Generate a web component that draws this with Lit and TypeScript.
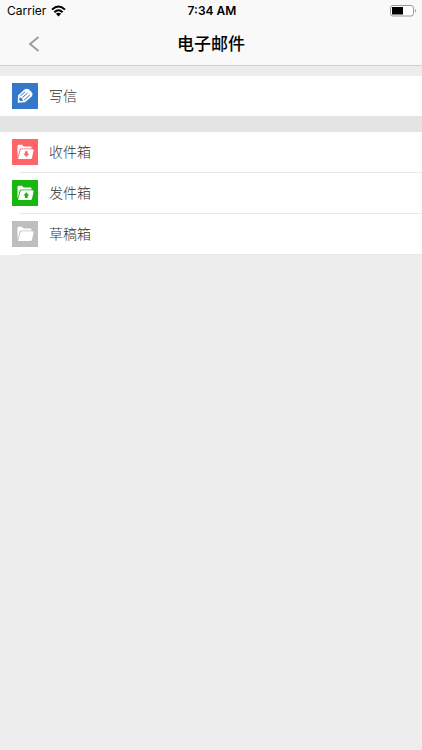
import { LitElement, html, svg, css } from "lit";
import { customElement, property } from "lit/decorators.js";

type IconName = "write" | "inbox" | "outbox" | "drafts";

const folder = svg`
  <path d="M5.5 18V7Q5.5 5.7 6.8 5.7H10L11.6 7.4H18.2Q19.6 7.4 19.6 8.8V9.4H9.6Q8 9.4 7.6 10.8L5.8 18Z"/>
  <path d="M10 10.3H20.4Q21.8 10.3 21.5 11.7L20 18.7Q19.7 20 18.4 20H6L8.4 11.6Q8.8 10.3 10 10.3Z"/>`;

const glyphs = {
  write: svg`
    <path d="M5.8 19.8L6 12.4L12.4 6.6Q14.6 5 17 6.4Q19.4 8.2 20.4 10.6Q20.9 12.4 19.4 13.8L13 19.2Z"/>
    <path class="cut" d="M8.4 12.8L13 8.8M10.4 14.6L15.6 10M12.2 17L17.8 12"/>
    <path class="hole" d="M7.3 14.4Q10.2 14.2 11 17.8L8.6 18.2L7.2 16.8Z"/>`,
  inbox: svg`${folder}<path class="hole" d="M12.9 12.2H15.7V14.8H17.2L14.3 18L11.4 14.8H12.9Z"/>`,
  outbox: svg`${folder}<path class="hole" d="M12.9 18H15.7V15.4H17.2L14.3 12.2L11.4 15.4H12.9Z"/>`,
  drafts: folder,
};

@customElement("mail-row")
export class MailRow extends LitElement {
  @property() label = "";
  @property() icon: IconName = "write";

  static styles = css`
    :host { display: block; }
    .row {
      display: flex;
      align-items: center;
      gap: 11px;
      width: 100%;
      height: 40px;
      padding: 0 12px;
      border: 0;
      background: #fff;
      color: #333;
      font: 300 14px/20px "Noto Sans CJK SC", sans-serif;
      text-align: left;
      cursor: pointer;
    }
    .label { padding-bottom: 2px; }
    .icon { flex: none; width: 26px; height: 26px; fill: #fff; }
    .write { background: #3577c8; --tile: #3577c8; }
    .inbox { background: #ff6469; --tile: #ff6469; }
    .outbox { background: #18b60e; --tile: #18b60e; }
    .drafts { background: #bebebe; --tile: #bebebe; }
    .cut { fill: none; stroke: var(--tile); stroke-width: 1; }
    .hole { fill: var(--tile); }
  `;

  render() {
    return html`<button class="row" type="button">
      <svg class="icon ${this.icon}" viewBox="0 0 26 26" aria-hidden="true">${glyphs[this.icon]}</svg>
      <span class="label">${this.label}</span>
    </button>`;
  }
}

@customElement("app-root")
export class AppRoot extends LitElement {
  static styles = css`
    :host {
      display: block;
      min-height: 100vh;
      background: #ededed;
      color: #000;
      font-family: Inter, "Noto Sans CJK SC", sans-serif;
    }
    .top { background: #f9f9f9; border-bottom: 1px solid #cecece; }
    .status, .nav {
      display: grid;
      grid-template-columns: 1fr auto 1fr;
      align-items: center;
    }
    .status { height: 22px; padding: 0 5px 0 7px; font: 12px/16px Inter, sans-serif; }
    .carrier { display: flex; align-items: center; gap: 5px; }
    .time { font-weight: 600; }
    .battery { justify-self: end; }
    .nav { height: 43px; padding: 0 20px; }
    .back {
      display: flex;
      justify-self: start;
      padding: 6px 8px;
      border: 0;
      background: none;
      cursor: pointer;
    }
    .title { margin: 0; padding-bottom: 2px; font: 500 17px/24px "Noto Sans CJK SC", sans-serif; }
    .compose { padding-top: 10px; border-bottom: 16px solid #e4e4e4; }
    .folders { margin: 0; padding: 0; list-style: none; background: #fff; }
    .folders li::after {
      content: "";
      display: block;
      height: 1px;
      margin-left: 20px;
      background: #e8e8e8;
    }
  `;

  render() {
    return html`
      <header class="top">
        <div class="status">
          <span class="carrier">Carrier
            <svg width="15" height="12" viewBox="0 0 15 12" fill="none" stroke="#000" stroke-width="2" aria-hidden="true">
              <path d="M1 4.6Q7.5 -1.6 14 4.6M3.4 7.2Q7.5 3.4 11.6 7.2"/>
              <path fill="#000" stroke="none" d="M4.9 8.7Q7.5 6.6 10.1 8.7L7.5 11.4Z"/>
            </svg>
          </span>
          <span class="time">7:34 AM</span>
          <svg class="battery" width="27" height="12" viewBox="0 0 27 12" role="img" aria-label="Battery">
            <rect x="0.5" y="0.5" width="23" height="10.5" rx="2.5" fill="#fff" stroke="#999"/>
            <rect x="2" y="2" width="11" height="7.5" fill="#000"/>
            <path d="M25 3.8Q27 5.8 25 7.8Z" fill="#999"/>
          </svg>
        </div>
        <nav class="nav">
          <button class="back" type="button" aria-label="返回">
            <svg width="12" height="16" viewBox="0 0 12 16" fill="none" stroke="#999" stroke-width="1.8">
              <path d="M10.5 1L2 8L10.5 15"/>
            </svg>
          </button>
          <h1 class="title">电子邮件</h1>
        </nav>
      </header>
      <main>
        <div class="compose"><mail-row label="写信" icon="write"></mail-row></div>
        <ul class="folders">
          <li><mail-row label="收件箱" icon="inbox"></mail-row></li>
          <li><mail-row label="发件箱" icon="outbox"></mail-row></li>
          <li><mail-row label="草稿箱" icon="drafts"></mail-row></li>
        </ul>
      </main>
    `;
  }
}
